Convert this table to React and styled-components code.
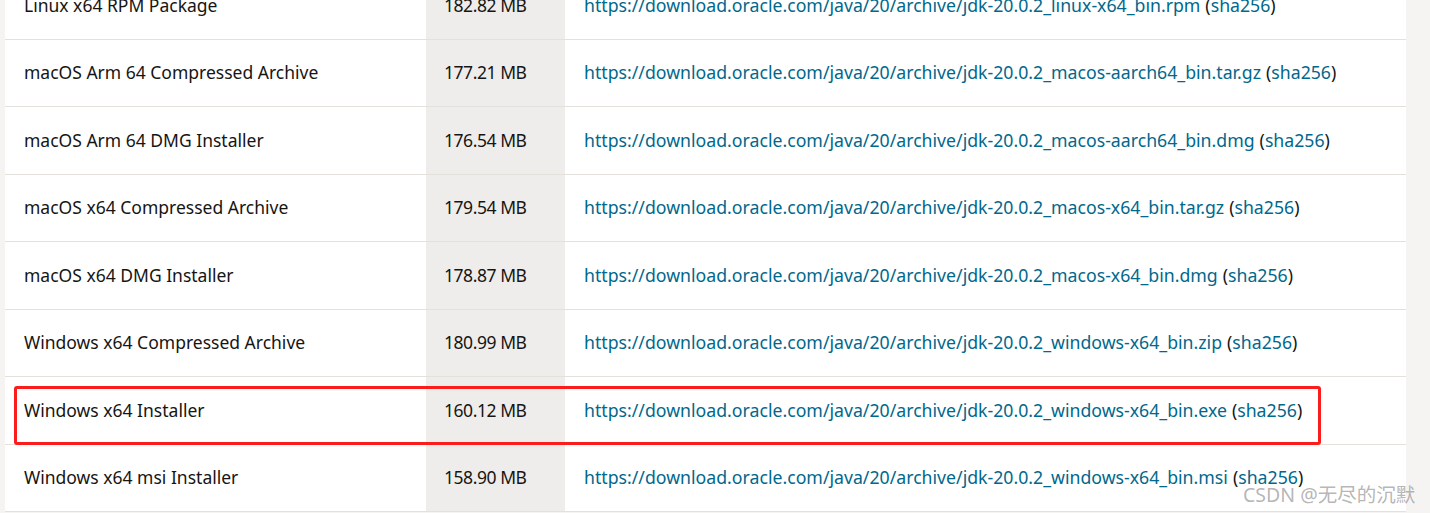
import React from 'react'
import styled, { createGlobalStyle } from 'styled-components'

const GlobalStyle = createGlobalStyle`
    html, body {
        margin: 0;
        padding: 0;
        background-color: #f5f4f2;
        overflow: hidden;
    }
`

const Page = styled.div`
    position: relative;
    width: 1430px;
    height: 513px;
    overflow: hidden;
    font-family: "Noto Sans", "Open Sans", sans-serif;
    color: #161513;
`

const Table = styled.div`
    margin: -28px 24px 0 5px;
    background-color: #fff;
    display: flex;
    flex-direction: column;
`

const Row = styled.div`
    display: grid;
    grid-template-columns: 421px 139px 1fr;
    height: 66.5px;
    border-bottom: 1px solid #e4e1dd;
`

const Cell = styled.div`
    display: flex;
    align-items: center;
    padding-left: ${p => p.$pad || 19}px;
    padding-bottom: 1px;
    font-size: ${p => p.$size || 17.5}px;
    letter-spacing: ${p => p.$tight ? '-0.45px' : 'normal'};
    white-space: nowrap;
    background-color: ${p => p.$shade ? '#efedeb' : 'transparent'};
`

const Link = styled.a`
    color: #00688c;
    text-decoration: none;
`

const Paren = styled.span`
    margin-left: 5px;
`

const Highlight = styled.div`
    position: absolute;
    left: 14px;
    top: 386px;
    width: 1301px;
    height: 53px;
    border: 3px solid #fb1c1c;
    border-radius: 3px;
`

const Watermark = styled.div`
    position: absolute;
    left: 1243px;
    top: 479px;
    font-family: "Noto Sans", "Noto Sans CJK SC", sans-serif;
    font-size: 19.5px;
    color: rgba(140, 140, 140, 0.65);
    white-space: nowrap;
`

const base = 'https://download.oracle.com/java/20/archive/jdk-20.0.2_'

const rows = [
    { name: 'Linux x64 RPM Package', size: '182.82 MB', file: 'linux-x64_bin.rpm' },
    { name: 'macOS Arm 64 Compressed Archive', size: '177.21 MB', file: 'macos-aarch64_bin.tar.gz' },
    { name: 'macOS Arm 64 DMG Installer', size: '176.54 MB', file: 'macos-aarch64_bin.dmg' },
    { name: 'macOS x64 Compressed Archive', size: '179.54 MB', file: 'macos-x64_bin.tar.gz' },
    { name: 'macOS x64 DMG Installer', size: '178.87 MB', file: 'macos-x64_bin.dmg' },
    { name: 'Windows x64 Compressed Archive', size: '180.99 MB', file: 'windows-x64_bin.zip' },
    { name: 'Windows x64 Installer', size: '160.12 MB', file: 'windows-x64_bin.exe' },
    { name: 'Windows x64 msi Installer', size: '158.90 MB', file: 'windows-x64_bin.msi' },
]

export default function App() {
    return (
        <Page>
            <GlobalStyle />
            <Table>
                {rows.map(r =>
                    <Row key={r.file}>
                        <Cell>{r.name}</Cell>
                        <Cell $shade $pad={18} $tight>{r.size}</Cell>
                        <Cell $size={17.7}>
                            <Link href="#">{base + r.file}</Link>
                            <Paren>(<Link href="#">sha256</Link>)</Paren>
                        </Cell>
                    </Row>
                )}
            </Table>
            <Highlight />
            <Watermark>CSDN @无尽的沉默</Watermark>
        </Page>
    )
}
